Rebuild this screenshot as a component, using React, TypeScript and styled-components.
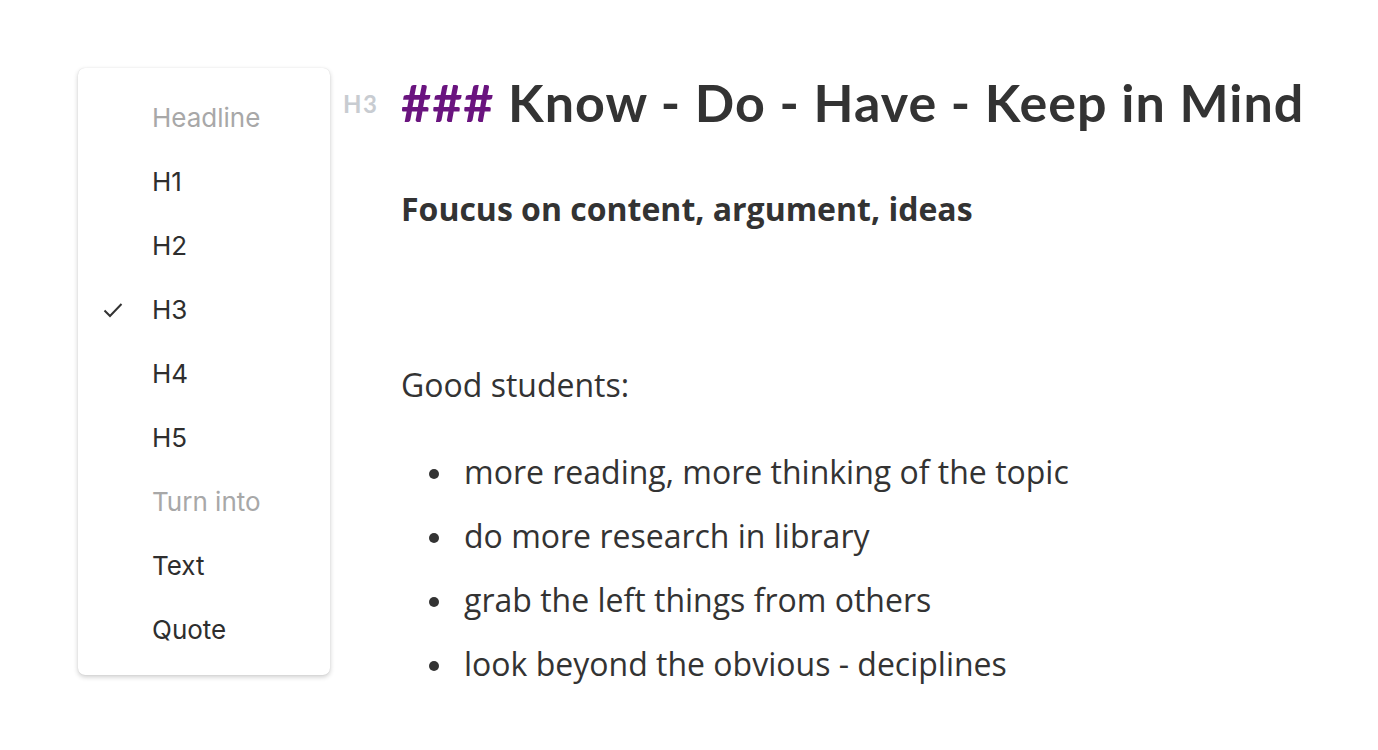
import styled, {createGlobalStyle} from 'styled-components';

const GlobalStyle = createGlobalStyle`
  html, body {
    margin: 0;
    padding: 0;
    background: #fff;
  }
`;

const menuItems = [
  {label: 'Headline', muted: true},
  {label: 'H1'},
  {label: 'H2'},
  {label: 'H3', checked: true},
  {label: 'H4'},
  {label: 'H5'},
  {label: 'Turn into', muted: true},
  {label: 'Text'},
  {label: 'Quote'},
];

const bullets = [
  'more reading, more thinking of the topic',
  'do more research in library',
  'grab the left things from others',
  'look beyond the obvious - deciplines',
];

function Check() {
  return (
    <svg width="20" height="16" viewBox="0 0 20 16">
      <path d="M1.5 8.5 L7 14 L18.5 2" fill="none" stroke="#333" strokeWidth="2" />
    </svg>
  );
}

export default function App() {
  return (
    <Page>
      <GlobalStyle />
      <Menu>
        {menuItems.map(item => (
          <MenuItem key={item.label} muted={!!item.muted}>
            <CheckSlot>{item.checked && <Check />}</CheckSlot>
            {item.label}
          </MenuItem>
        ))}
      </Menu>
      <Editor>
        <HeadingRow>
          <LevelTag>H3</LevelTag>
          <Heading>
            <Marker>###</Marker> Know - Do - Have - Keep in Mind
          </Heading>
        </HeadingRow>
        <Strong>Foucus on content, argument, ideas</Strong>
        <Para>Good students:</Para>
        <List>
          {bullets.map(b => (
            <Item key={b}>{b}</Item>
          ))}
        </List>
      </Editor>
    </Page>
  );
}

const Page = styled.div`
  display: flex;
  align-items: flex-start;
  padding: 68px 0 0 78px;
  width: 1378px;
  height: 750px;
  box-sizing: border-box;
`;

const Menu = styled.div`
  width: 252px;
  box-sizing: border-box;
  padding: 18px 0 13px;
  background: #fff;
  border-radius: 7px;
  box-shadow: 0 2px 5px rgba(0, 0, 0, 0.2), 0 0 1px rgba(0, 0, 0, 0.15);
  flex-shrink: 0;
`;

const MenuItem = styled.div<{muted: boolean}>`
  display: flex;
  align-items: center;
  height: 64px;
  line-height: 64px;
  font-family: Inter, 'Liberation Sans', sans-serif;
  font-size: 26px;
  color: ${p => (p.muted ? '#a8a8a8' : '#2e2e2e')};
`;

const CheckSlot = styled.span`
  width: 74px;
  padding-left: 25px;
  box-sizing: border-box;
  display: flex;
  align-items: center;
`;

const Editor = styled.div`
  flex: 1;
  font-family: 'Open Sans', sans-serif;
  color: #333;
  padding-left: 13px;
`;

const HeadingRow = styled.div`
  display: flex;
  align-items: flex-start;
  margin-top: 2px;
`;

const LevelTag = styled.span`
  width: 58px;
  flex-shrink: 0;
  margin-top: 22px;
  font-family: Lato, 'Open Sans', sans-serif;
  font-size: 24px;
  line-height: 24px;
  font-weight: 700;
  color: #c8ccd1;
  letter-spacing: 1.5px;
`;

const Heading = styled.h3`
  margin: 0;
  font-family: Lato, 'Open Sans', sans-serif;
  font-size: 52px;
  font-weight: 700;
  letter-spacing: 1px;
  line-height: 64px;
  white-space: nowrap;
`;

const Marker = styled.span`
  color: #6a147f;
`;

const Strong = styled.p`
  margin: 43px 0 0 58px;
  font-size: 32px;
  line-height: 64px;
  font-weight: 700;
`;

const Para = styled.p`
  margin: 112px 0 0 58px;
  font-size: 32px;
  line-height: 64px;
`;

const List = styled.ul`
  list-style: none;
  margin: 23px 0 0 58px;
  padding: 0 0 0 28px;
  font-size: 32px;
`;

const Item = styled.li`
  display: flex;
  align-items: center;
  height: 64px;
  line-height: 64px;
  &::before {
    content: '';
    width: 10px;
    height: 10px;
    border-radius: 50%;
    background: #333;
    margin: 4px 25px 0 0;
  }
`;
